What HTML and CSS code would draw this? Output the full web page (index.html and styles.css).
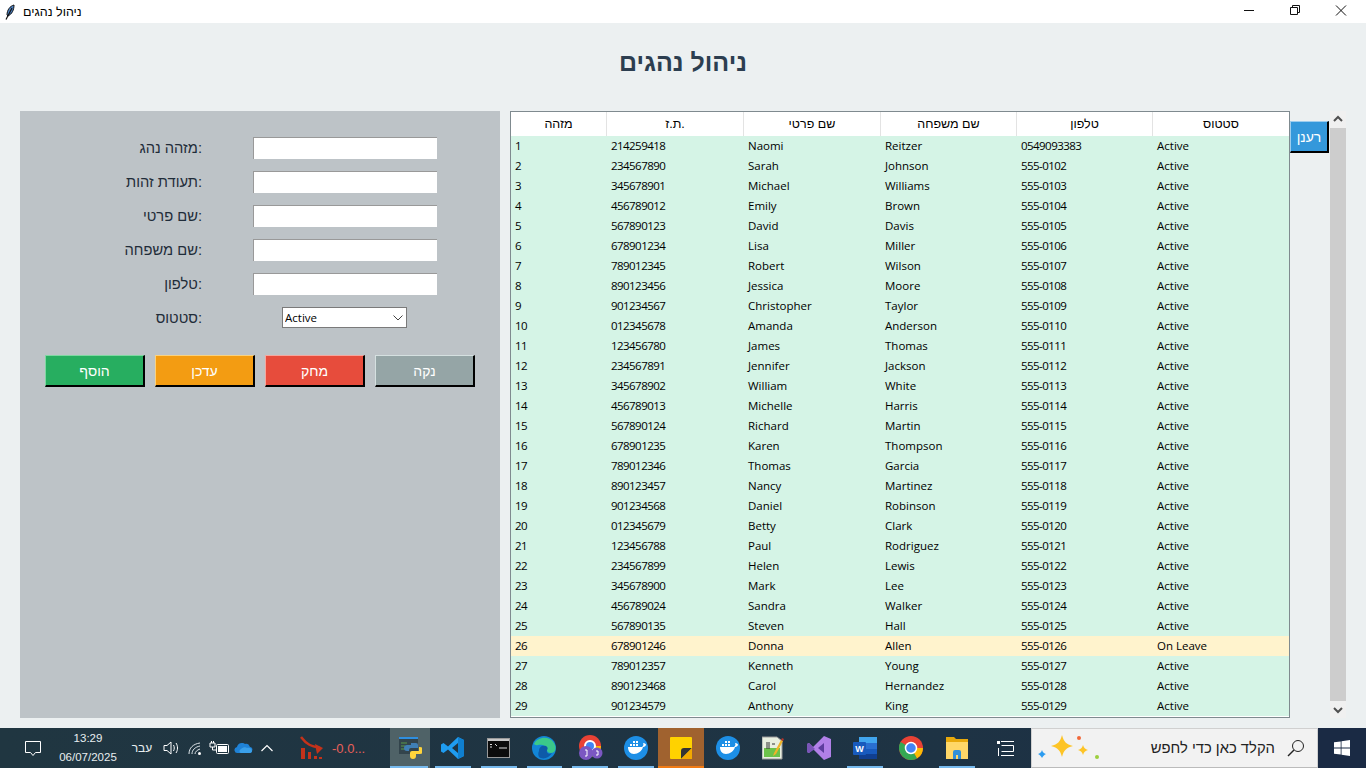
FILE: index.html
```html
<!DOCTYPE html>
<html lang="he">
<head>
    <meta charset="UTF-8">
    <meta name="viewport" content="width=device-width, initial-scale=1.0">
    <title>ניהול נהגים</title>
    <link rel="stylesheet" href="styles.css">
</head>
<body>
    <!-- Window title bar -->
    <header class="titlebar">
        <svg class="feather" width="10" height="16" viewBox="0 0 10 16">
            <path d="M9 1C5 2 2 6 2 11l1 1c4-2 6-6 6-11z" fill="#4a7fc0" stroke="#111" stroke-width="1"/>
            <path d="M7 4L1 15.500" stroke="#111" stroke-width="1.200" fill="none"/>
        </svg>
        <span class="titlebar-text">ניהול נהגים</span>
        <div class="window-controls">
            <svg class="win-btn" width="46" height="23" viewBox="0 0 46 23"><path d="M18 10.500h10" stroke="#111"/></svg>
            <svg class="win-btn" width="46" height="23" viewBox="0 0 46 23"><path d="M18.500 7.500h7v7h-7zM20.500 7.500v-2h7v7h-2" stroke="#111" fill="none"/></svg>
            <svg class="win-btn" width="46" height="23" viewBox="0 0 46 23"><path d="M18 5.500l10 10M28 5.500l-10 10" stroke="#111" fill="none"/></svg>
        </div>
    </header>

    <main class="app">
        <h1 class="page-title">ניהול נהגים</h1>
        <div class="content">
            <section class="form-panel">
                <form class="driver-form">
                    <label for="driverId">מזהה נהג:</label>
                    <input type="text" id="driverId">
                    <label for="nationalId">תעודת זהות:</label>
                    <input type="text" id="nationalId">
                    <label for="firstName">שם פרטי:</label>
                    <input type="text" id="firstName">
                    <label for="lastName">שם משפחה:</label>
                    <input type="text" id="lastName">
                    <label for="phone">טלפון:</label>
                    <input type="text" id="phone">
                    <label for="status">סטטוס:</label>
                    <div class="combo">
                        <select id="status">
                            <option>Active</option>
                            <option>On Leave</option>
                        </select>
                        <svg class="combo-arrow" width="10" height="6" viewBox="0 0 10 6"><path d="M.5.500L5 5 9.500.500" stroke="#444" fill="none"/></svg>
                    </div>
                </form>
                <div class="form-buttons">
                    <button class="btn btn-add">הוסף</button>
                    <button class="btn btn-update">עדכן</button>
                    <button class="btn btn-delete">מחק</button>
                    <button class="btn btn-clear">נקה</button>
                </div>
            </section>

            <section class="table-box">
                <table class="drivers">
                    <colgroup>
                        <col class="col-id">
                        <col class="col-wide">
                        <col class="col-wide">
                        <col class="col-narrow">
                        <col class="col-narrow">
                        <col class="col-narrow">
                    </colgroup>
                    <thead>
                        <tr><th>מזהה</th><th>ת.ז.</th><th>שם פרטי</th><th>שם משפחה</th><th>טלפון</th><th>סטטוס</th></tr>
                    </thead>
                    <tbody>
                        <tr><td>1</td><td>214259418</td><td>Naomi</td><td>Reitzer</td><td>0549093383</td><td>Active</td></tr>
                        <tr><td>2</td><td>234567890</td><td>Sarah</td><td>Johnson</td><td>555-0102</td><td>Active</td></tr>
                        <tr><td>3</td><td>345678901</td><td>Michael</td><td>Williams</td><td>555-0103</td><td>Active</td></tr>
                        <tr><td>4</td><td>456789012</td><td>Emily</td><td>Brown</td><td>555-0104</td><td>Active</td></tr>
                        <tr><td>5</td><td>567890123</td><td>David</td><td>Davis</td><td>555-0105</td><td>Active</td></tr>
                        <tr><td>6</td><td>678901234</td><td>Lisa</td><td>Miller</td><td>555-0106</td><td>Active</td></tr>
                        <tr><td>7</td><td>789012345</td><td>Robert</td><td>Wilson</td><td>555-0107</td><td>Active</td></tr>
                        <tr><td>8</td><td>890123456</td><td>Jessica</td><td>Moore</td><td>555-0108</td><td>Active</td></tr>
                        <tr><td>9</td><td>901234567</td><td>Christopher</td><td>Taylor</td><td>555-0109</td><td>Active</td></tr>
                        <tr><td>10</td><td>012345678</td><td>Amanda</td><td>Anderson</td><td>555-0110</td><td>Active</td></tr>
                        <tr><td>11</td><td>123456780</td><td>James</td><td>Thomas</td><td>555-0111</td><td>Active</td></tr>
                        <tr><td>12</td><td>234567891</td><td>Jennifer</td><td>Jackson</td><td>555-0112</td><td>Active</td></tr>
                        <tr><td>13</td><td>345678902</td><td>William</td><td>White</td><td>555-0113</td><td>Active</td></tr>
                        <tr><td>14</td><td>456789013</td><td>Michelle</td><td>Harris</td><td>555-0114</td><td>Active</td></tr>
                        <tr><td>15</td><td>567890124</td><td>Richard</td><td>Martin</td><td>555-0115</td><td>Active</td></tr>
                        <tr><td>16</td><td>678901235</td><td>Karen</td><td>Thompson</td><td>555-0116</td><td>Active</td></tr>
                        <tr><td>17</td><td>789012346</td><td>Thomas</td><td>Garcia</td><td>555-0117</td><td>Active</td></tr>
                        <tr><td>18</td><td>890123457</td><td>Nancy</td><td>Martinez</td><td>555-0118</td><td>Active</td></tr>
                        <tr><td>19</td><td>901234568</td><td>Daniel</td><td>Robinson</td><td>555-0119</td><td>Active</td></tr>
                        <tr><td>20</td><td>012345679</td><td>Betty</td><td>Clark</td><td>555-0120</td><td>Active</td></tr>
                        <tr><td>21</td><td>123456788</td><td>Paul</td><td>Rodriguez</td><td>555-0121</td><td>Active</td></tr>
                        <tr><td>22</td><td>234567899</td><td>Helen</td><td>Lewis</td><td>555-0122</td><td>Active</td></tr>
                        <tr><td>23</td><td>345678900</td><td>Mark</td><td>Lee</td><td>555-0123</td><td>Active</td></tr>
                        <tr><td>24</td><td>456789024</td><td>Sandra</td><td>Walker</td><td>555-0124</td><td>Active</td></tr>
                        <tr><td>25</td><td>567890135</td><td>Steven</td><td>Hall</td><td>555-0125</td><td>Active</td></tr>
                        <tr class="on-leave"><td>26</td><td>678901246</td><td>Donna</td><td>Allen</td><td>555-0126</td><td>On Leave</td></tr>
                        <tr><td>27</td><td>789012357</td><td>Kenneth</td><td>Young</td><td>555-0127</td><td>Active</td></tr>
                        <tr><td>28</td><td>890123468</td><td>Carol</td><td>Hernandez</td><td>555-0128</td><td>Active</td></tr>
                        <tr><td>29</td><td>901234579</td><td>Anthony</td><td>King</td><td>555-0129</td><td>Active</td></tr>
                    </tbody>
                </table>
            </section>

            <button class="btn btn-refresh">רענן</button>

            <div class="scrollbar">
                <svg class="scroll-arrow" width="16" height="17" viewBox="0 0 16 17"><path d="M4 10l4-4 4 4" stroke="#505050" stroke-width="2" fill="none"/></svg>
                <div class="scroll-thumb"></div>
                <svg class="scroll-arrow" width="16" height="17" viewBox="0 0 16 17"><path d="M4 7l4 4 4-4" stroke="#505050" stroke-width="2" fill="none"/></svg>
            </div>
        </div>
    </main>

    <footer class="taskbar">
        <div class="tray">
            <svg class="tray-action" width="18" height="17" viewBox="0 0 18 17"><path d="M1.500 1.500h15v11h-5l-2.500 3-2.500-3h-5z" stroke="#fff" fill="none"/></svg>
            <div class="clock"><span>13:29</span><span>06/07/2025</span></div>
            <span class="lang">עבר</span>
            <svg class="tray-icon" width="24" height="16" viewBox="0 0 24 16"><path d="M5 5.500h3l4-3.500v12l-4-3.500H5z" stroke="#fff" fill="none"/><path d="M14.500 5c1 2 1 4 0 6M17 3c2 3 2 7 0 10" stroke="#fff" fill="none"/></svg>
            <svg class="tray-icon" width="24" height="16" viewBox="0 0 24 16"><path d="M6 14c0-6 4-10 11-11M9 14c0-4 3-7 8-8M12 14c0-2 2-4 5-5" stroke="#dfe6ea" fill="none"/><circle cx="16.500" cy="13.500" r="1.500" fill="#fff"/></svg>
            <svg class="tray-icon" width="24" height="16" viewBox="0 0 24 16"><rect x="9.500" y="4.500" width="12" height="9" rx="1" stroke="#fff" fill="none"/><rect x="11" y="6" width="9" height="6" fill="#fff"/><path d="M3 3h5v4H3zM4.500 1v2M6.500 1v2M5.500 7v3H9" stroke="#fff" fill="none"/></svg>
            <svg class="tray-icon" width="24" height="16" viewBox="0 0 24 16"><path d="M7 13a3 3 0 0 1-1-6 5 5 0 0 1 8-3c2-1 4 0 5 3 2 0 3 2 2 4-1 2-2 2-3 2z" fill="#1f82d6"/><path d="M10 13c-2 0-2-3 0-4 2-2 5-2 6-1 3-1 5 1 5 3 0 1-1 2-2 2z" fill="#3aa0ea"/></svg>
            <svg class="tray-icon" width="24" height="16" viewBox="0 0 24 16"><path d="M6.500 11l5.500-5.500 5.500 5.500" stroke="#fff" stroke-width="1.200" fill="none"/></svg>
            <svg class="tray-chart" width="24" height="24" viewBox="0 0 24 24">
                <path d="M1 1c6 8 10 9 19 11" stroke="#c5321a" stroke-width="2.500" fill="none"/>
                <path d="M15 8l8 4-6 6z" fill="#c5321a"/>
                <path d="M1 12h4v11H1zM8 16h3v7H8zM14 20h3v3h-3zM19 21h3v2h-3z" fill="#c5321a"/>
            </svg>
            <span class="tray-value">-0.0...</span>
        </div>

        <div class="apps">
            <div class="app-btn app-current">
                <svg width="24" height="24" viewBox="0 0 24 24">
                    <rect x="1" y="1" width="19" height="17" fill="#33444c"/><rect x="1" y="1" width="19" height="2" fill="#2f8fe0"/>
                    <path d="M3 7h6M3 10h4M3 13h5" stroke="#5a9a4a"/>
                    <path d="M13 7h5a2 2 0 0 1 2 2v3h-7a2 2 0 0 0-2 2v1H9a2 2 0 0 1 0-6h4z" fill="#3f7fb5"/>
                    <path d="M21 11h1a2 2 0 0 1 0 7h-4v2a3 3 0 0 1-6 0v-3a2 2 0 0 1 2-2h7z" fill="#ffd43b"/>
                </svg>
            </div>
            <div class="app-btn app-open">
                <svg width="24" height="24" viewBox="0 0 24 24"><path d="M17 1l6 3v16l-6 3-10-9.500L2.500 17 0 15.500V8.500L2.500 7 7 10.500zM17 7l-6 5 6 5z" fill="#1f9cf0"/><path d="M17 1l6 3v16l-6 3z" fill="#0f7fcf"/></svg>
            </div>
            <div class="app-btn app-open">
                <svg width="24" height="20" viewBox="0 0 24 20"><rect x=".5" y=".5" width="22" height="19" fill="#0c0c0c" stroke="#999"/><rect x="1" y="1" width="21" height="2" fill="#c8c8c8"/><path d="M3 6.500h2M3 9h2M8 6l2 2M12 10h8" stroke="#ddd"/></svg>
            </div>
            <div class="app-btn app-open">
                <svg width="24" height="24" viewBox="0 0 24 24"><circle cx="12" cy="12" r="12" fill="#1285d6"/><path d="M2 8c3-7 15-9 20-1 2 3 2 7 0 9-3 2-7 1-7-2 0-4-5-6-9-5-2 .500-3 0-4-1z" fill="#3bc98a"/><path d="M7 15c0-4 3-6 7-5 2 1 2 3 1 4-1 3 2 5 5 3-3 5-9 7-13 4-1-2-1-4 0-6z" fill="#0e5aa8"/></svg>
            </div>
            <div class="app-btn app-open">
                <svg width="26" height="26" viewBox="0 0 26 26">
                    <circle cx="13" cy="11" r="11" fill="#e94235"/>
                    <path d="M13 11L24 11a11 11 0 0 1-5 9z" fill="#fbbc05"/><path d="M13 11l6 9a11 11 0 0 1-16-4z" fill="#34a853"/>
                    <circle cx="13" cy="11" r="5" fill="#4285f4" stroke="#fff" stroke-width="2"/>
                    <circle cx="9" cy="18" r="7" fill="#7b57c2"/><circle cx="20" cy="18" r="5.500" fill="#7b57c2"/>
                    <path d="M8 15h2v6H8M19 16h2v4h-2" stroke="#fff" fill="none"/>
                </svg>
            </div>
            <div class="app-btn app-open">
                <svg width="24" height="24" viewBox="0 0 24 24"><circle cx="12" cy="12" r="12" fill="#1d8fe6"/><path d="M4 11h14c1-1 2-2 1-4 2 0 3 1 3 2-1 2-3 2-3 2-1 4-5 7-9 7-4 0-6-3-6-7z" fill="#fff"/><path d="M6 8h2v2H6zM9 8h2v2H9zM12 8h2v2h-2zM9 5h2v2H9zM12 5h2v2h-2z" fill="#fff"/></svg>
            </div>
            <div class="app-btn app-sticky">
                <svg width="22" height="22" viewBox="0 0 22 22"><path d="M1 0h20a1 1 0 0 1 1 1v21H1a1 1 0 0 1-1-1V1a1 1 0 0 1 1-1z" fill="#ffd200"/><path d="M22 11L11 22V14a3 3 0 0 1 3-3z" fill="#333"/><path d="M22 11v11H11z" fill="#f2a900"/></svg>
            </div>
            <div class="app-btn">
                <svg width="24" height="24" viewBox="0 0 24 24"><circle cx="12" cy="12" r="12" fill="#1d8fe6"/><path d="M4 11h14c1-1 2-2 1-4 2 0 3 1 3 2-1 2-3 2-3 2-1 4-5 7-9 7-4 0-6-3-6-7z" fill="#fff"/><path d="M6 8h2v2H6zM9 8h2v2H9zM12 8h2v2h-2zM9 5h2v2H9zM12 5h2v2h-2z" fill="#fff"/></svg>
            </div>
            <div class="app-btn">
                <svg width="22" height="24" viewBox="0 0 22 24"><path d="M0 1h15l5 4v18H0z" fill="#e8efe0" stroke="#999"/><path d="M2 12h16v9H2z" fill="#6cc24a"/><path d="M5 6v7M7 6v7M10 8h3" stroke="#333"/><path d="M12 17l7-13 2 1-7 13-3 2z" fill="#f0b429"/><path d="M19 4l1-2 2 1-1 2z" fill="#b3362b"/></svg>
            </div>
            <div class="app-btn">
                <svg width="24" height="24" viewBox="0 0 24 24"><path d="M17 0l7 3v18l-7 3L6 13 2 17l-2-1V8l2-1 4 4z" fill="#b180e8"/><path d="M17 7l-6 5 6 5z" fill="#5d3d9e"/><path d="M0 8l2-1 4 4 2 2-6 4-2-1z" fill="#7a55b8"/></svg>
            </div>
            <div class="app-btn app-open">
                <svg width="24" height="24" viewBox="0 0 24 24"><rect x="6" y="1" width="18" height="22" rx="1" fill="#2a6fd0"/><rect x="6" y="1" width="18" height="6" fill="#41a5ee"/><rect x="6" y="13" width="18" height="5" fill="#185abd"/><rect x="6" y="18" width="18" height="5" fill="#103f91"/><rect y="6" width="13" height="13" rx="1" fill="#185abd"/><text class="word-letter" x="6.500" y="16">W</text></svg>
            </div>
            <div class="app-btn">
                <svg width="24" height="24" viewBox="0 0 24 24"><circle cx="12" cy="12" r="12" fill="#e94235"/><path d="M12 12h12a12 12 0 0 1-6 10.400z" fill="#fbbc05"/><path d="M12 12l6 10.400A12 12 0 0 1 1.600 6z" fill="#34a853"/><circle cx="12" cy="12" r="5.500" fill="#4285f4" stroke="#fff" stroke-width="1.500"/></svg>
            </div>
            <div class="app-btn app-open">
                <svg width="24" height="22" viewBox="0 0 24 22"><path d="M1 0h8l2 2h12v20H1z" fill="#e8a90c"/><path d="M1 5h22v17H1z" fill="#ffd768"/><path d="M8 22v-7a2 2 0 0 1 2-2h4a2 2 0 0 1 2 2v7h-3v-4h-2v4z" fill="#2f8fd8"/></svg>
            </div>
            <div class="app-btn app-taskview">
                <svg width="17" height="17" viewBox="0 0 17 17"><path d="M4 1.500h13M4 15.500h13M4.500 5.500h12v6h-12M1.500 8v8" stroke="#fff" fill="none"/><rect y="1" width="3" height="3" fill="#fff"/></svg>
            </div>
        </div>

        <div class="search-box">
            <svg class="sparkles" width="62" height="30" viewBox="0 0 62 30">
                <path d="M24 2c2 7 4 9 11 11-7 2-9 4-11 11-2-7-4-9-11-11 7-2 9-4 11-11z" fill="#fdc426"/>
                <path d="M45 12c1 3 2 4 5 5-3 1-4 2-5 5-1-3-2-4-5-5 3-1 4-2 5-5z" fill="#fdc426"/>
                <path d="M4 17c1 3 2 3 4 4-2 1-3 2-4 4-1-2-2-3-4-4 2-1 3-1 4-4z" fill="#2c9cf0"/>
                <circle cx="41" cy="5" r="2" fill="#f2683a"/><circle cx="59" cy="24" r="2" fill="#9ccf3e"/>
            </svg>
            <span class="search-text">הקלד כאן כדי לחפש</span>
            <svg class="search-icon" width="18" height="18" viewBox="0 0 18 18"><circle cx="11" cy="7" r="5.500" stroke="#222" fill="none"/><path d="M7 11L1 17" stroke="#222" stroke-width="1.400"/></svg>
        </div>

        <div class="start">
            <svg width="16" height="16" viewBox="0 0 16 16"><path d="M0 2.300l6.700-.9v6.200H0zM7.500 1.300L16 0v7.600H7.500zM0 8.400h6.700v6.200L0 13.700zM7.500 8.400H16V16l-8.500-1.300z" fill="#fff"/></svg>
        </div>
    </footer>
</body>
</html>
```

FILE: styles.css
```css
* {
    box-sizing: border-box;
}
html, body {
    height: 100%;
}
body {
    margin: 0;
    display: flex;
    flex-direction: column;
    height: 768px;
    overflow: hidden;
    font-family: "Liberation Sans", Arial, sans-serif;
    background-color: #ecf0f1;
}

/* title bar */
.titlebar {
    display: flex;
    align-items: center;
    height: 23px;
    background-color: #fff;
    padding-left: 5px;
}
.titlebar-text {
    margin-left: 8px;
    font-size: 12.5px;
    color: #000;
}
.window-controls {
    display: flex;
    margin-left: auto;
    margin-right: 2px;
}
.win-btn {
    display: block;
}

/* app area */
.app {
    flex: 1;
    display: flex;
    flex-direction: column;
    min-height: 0;
}
.page-title {
    height: 88px;
    margin: 0;
    padding-top: 22px;
    text-align: center;
    font-size: 25px;
    line-height: 34px;
    color: #2c3e50;
}
.content {
    display: flex;
    height: 607px;
    padding-left: 20px;
}

/* form panel */
.form-panel {
    width: 480px;
    margin-right: 10px;
    padding-top: 26px;
    background-color: #bdc3c7;
}
.driver-form {
    display: grid;
    grid-template-columns: 182px 184px;
    grid-auto-rows: 22px;
    column-gap: 51px;
    row-gap: 12px;
    align-items: center;
}
.driver-form label {
    text-align: right;
    font-size: 14.7px;
    color: #1f2c39;
}
.driver-form input {
    width: 184px;
    height: 22px;
    padding: 0 3px;
    border: none;
    border-top: 1px solid #999;
    border-left: 1px solid #999;
    background-color: #fff;
}
.combo {
    position: relative;
    align-self: start;
    width: 125px;
    height: 21px;
    margin-left: 29px;
}
.combo select {
    appearance: none;
    width: 100%;
    height: 100%;
    padding: 0 0 0 2px;
    border: 1px solid #7a7a7a;
    border-radius: 0;
    background-color: #fff;
    font-family: "Open Sans", sans-serif;
    font-size: 11.5px;
    color: #000;
}
.combo-arrow {
    position: absolute;
    top: 8px;
    right: 4px;
    pointer-events: none;
}

/* buttons */
.form-buttons {
    display: flex;
    gap: 10px;
    margin-top: 26px;
    padding-left: 25px;
}
.btn {
    width: 100px;
    height: 32px;
    padding: 0;
    border-style: solid;
    border-width: 1px 2px 2px 1px;
    font-family: "Liberation Sans", Arial, sans-serif;
    font-size: 14px;
    color: #fff;
    cursor: pointer;
}
.btn-add {
    background-color: #27ae60;
    border-color: #7fd8a2 #000 #000 #7fd8a2;
}
.btn-update {
    background-color: #f39c12;
    border-color: #fad27f #000 #000 #fad27f;
}
.btn-delete {
    background-color: #e74c3c;
    border-color: #f5a79f #000 #000 #f5a79f;
}
.btn-clear {
    background-color: #95a5a6;
    border-color: #d5e0e0 #000 #000 #d5e0e0;
}
.btn-refresh {
    width: 39px;
    margin-top: 10px;
    background-color: #3498db;
    border-color: #9dcdee #000 #000 #9dcdee;
}

/* drivers table */
.table-box {
    width: 780px;
    border: 1px solid #7f8a8f;
    background-color: #fff;
    overflow: hidden;
}
.drivers {
    table-layout: fixed;
    width: 778px;
    border-collapse: separate;
    border-spacing: 0;
    font-family: "Open Sans", sans-serif;
    font-size: 11.5px;
    color: #000;
}
.col-id {
    width: 96px;
}
.col-wide {
    width: 137px;
}
.col-narrow {
    width: 136px;
}
.drivers th {
    height: 24px;
    padding: 0;
    font-family: "Liberation Sans", Arial, sans-serif;
    font-size: 12.5px;
    font-weight: normal;
    text-align: center;
    background-color: #fff;
    border-right: 1px solid #e3e3e3;
}
.drivers th:last-child {
    border-right: none;
}
.drivers td {
    height: 20px;
    padding: 0 0 2px 4px;
    white-space: nowrap;
    background-color: #d5f4e6;
}
.drivers td:nth-child(1),
.drivers td:nth-child(2),
.drivers td:nth-child(5) {
    letter-spacing: -0.55px;
}
.drivers .on-leave td {
    background-color: #fff3cd;
}

/* scrollbar */
.scrollbar {
    display: flex;
    flex-direction: column;
    width: 16px;
    margin-left: 1px;
    background-color: #f0f0f0;
}
.scroll-arrow {
    display: block;
    flex: none;
}
.scroll-thumb {
    flex: 1;
    margin-bottom: 17px;
    background-color: #cdcdcd;
}
.scrollbar .scroll-arrow:last-child {
    margin-top: -17px;
}

/* taskbar */
.taskbar {
    display: flex;
    height: 40px;
    background: linear-gradient(to right, #203641, #1e3344 70%, #1b2c45);
    color: #fff;
}
.tray {
    display: flex;
    align-items: center;
    width: 390px;
    padding-left: 24px;
}
.tray-action {
    flex: none;
}
.clock {
    display: flex;
    flex-direction: column;
    align-items: center;
    width: 78px;
    margin-left: 7px;
    font-size: 11.5px;
    line-height: 19px;
    color: #e8eef0;
}
.lang {
    width: 28px;
    margin-left: 1px;
    margin-right: 3px;
    text-align: center;
    font-size: 12px;
    color: #e8eef0;
}
.tray-icon {
    flex: none;
}
.tray-chart {
    margin-left: 21px;
    flex: none;
}
.tray-value {
    margin-left: 8px;
    font-size: 13px;
    color: #e8605a;
}
.apps {
    display: flex;
    width: 641px;
}
.app-btn {
    position: relative;
    display: flex;
    align-items: center;
    justify-content: center;
    width: 45.8px;
    height: 40px;
}
.app-btn svg {
    display: block;
}
.app-open::after,
.app-current::after {
    content: "";
    position: absolute;
    left: 5px;
    right: 5px;
    bottom: 0;
    height: 2px;
    background-color: #76b9ed;
}
.app-current {
    width: 40px;
    background-color: #4f6267;
}
.app-current::after {
    left: 0;
    right: 2px;
}
.app-sticky {
    margin-left: -1px;
    margin-right: 1px;
    background-color: #a0622f;
    box-shadow: inset 0 -2px 0 #f07a14;
}
.app-taskview {
    margin-left: 3px;
}
.word-letter {
    font-family: "Liberation Sans", Arial, sans-serif;
    font-size: 9px;
    font-weight: bold;
    fill: #fff;
    text-anchor: middle;
}
.search-box {
    display: flex;
    align-items: center;
    width: 287px;
    padding: 0 12px 0 6px;
    background-color: #f2f2f2;
    border: 1px solid #d0d0d0;
    border-bottom-color: #bbb;
}
.sparkles {
    flex: none;
}
.search-text {
    margin-left: auto;
    font-size: 14.8px;
    color: #222;
}
.search-icon {
    flex: none;
    margin-left: 12px;
}
.start {
    flex: 1;
    display: flex;
    align-items: center;
    justify-content: center;
    background-color: #1a2a44;
}
```
